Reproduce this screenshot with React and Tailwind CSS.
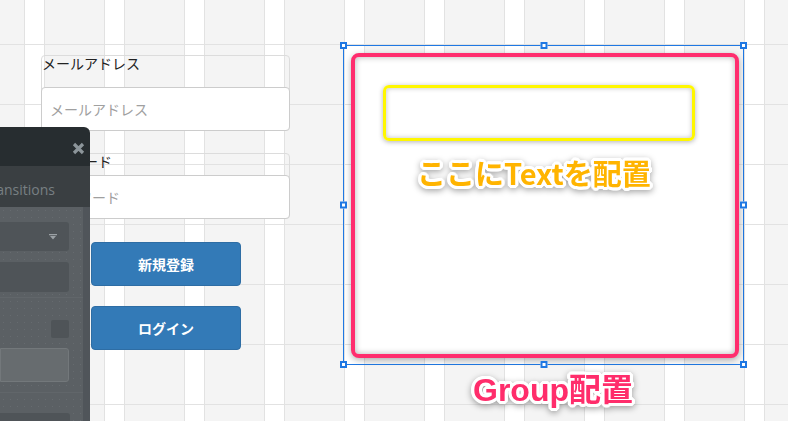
const jp = "font-['Noto_Sans_CJK_JP',sans-serif]";

const outlineWhite =
  "[text-shadow:3px_0_0_#fff,-3px_0_0_#fff,0_3px_0_#fff,0_-3px_0_#fff,2px_2px_0_#fff,-2px_2px_0_#fff,2px_-2px_0_#fff,-2px_-2px_0_#fff,3px_1px_0_#fff,-3px_1px_0_#fff,3px_-1px_0_#fff,-3px_-1px_0_#fff,1px_3px_0_#fff,-1px_3px_0_#fff,1px_-3px_0_#fff,-1px_-3px_0_#fff]";

const Handle = ({ pos }) => (
  <span
    className={`absolute w-[7px] h-[7px] bg-white border-2 border-[#1f78e3] ${pos}`}
  />
);

const FormGroup = ({ label, placeholder, labelHeight }) => (
  <div className="border border-[#dcdcdc] rounded-[4px]">
    <div className={`${labelHeight} text-[14px] leading-[14px] text-[#222] whitespace-nowrap`}>
      {label}
    </div>
    <div className="-mx-px -mb-px h-[44px] bg-white border border-[#cccccc] rounded-[4px] flex items-center px-2 text-[14px] text-[#a0a0a0]">
      {placeholder}
    </div>
  </div>
);

const SidePanel = () => (
  <div className="absolute left-0 top-[127px] bottom-0 w-[90px] rounded-tr-[6px] overflow-hidden flex flex-col">
    {/* title bar */}
    <div className="h-[39px] bg-[#272d30] relative shrink-0">
      <svg
        className="absolute left-[72px] top-[15px]"
        width="13"
        height="13"
        viewBox="0 0 13 13"
      >
        <path d="M2 2L11 11M11 2L2 11" stroke="#8c959a" strokeWidth="3.2" />
      </svg>
    </div>
    {/* tabs */}
    <div className="h-[41px] bg-[#3a3f42] shrink-0 pt-[14px]">
      <div className="w-[55px] flex justify-end whitespace-nowrap font-['Open_Sans',sans-serif] text-[14px] leading-[19px] text-[#787f83]">
        Transitions
      </div>
    </div>
    {/* body */}
    <div className="flex-1 flex">
      <div className="w-[83px] bg-[#5b6064] bg-[image:radial-gradient(circle,#666b6f_0.6px,transparent_1px)] bg-[size:7px_7px] flex flex-col">
        <div className="mt-[15px] h-[29px] w-[69px] bg-[#4f5458] rounded-r-[3px] flex items-center justify-end pr-[12px]">
          <svg width="8" height="6" viewBox="0 0 8 6">
            <path d="M0 0H8V1.3H0Z M1 2H7L4 5.5Z" fill="#9ba1a5" />
          </svg>
        </div>
        <div className="mt-[11px] h-[30px] w-[69px] bg-[#4f5458] rounded-r-[3px]" />
        <div className="mt-[5px] h-px w-full bg-[#61666a]" />
        <div className="mt-[22px] ml-[51px] w-[18px] h-[18px] bg-[#4f5458] rounded-[2px]" />
        <div className="mt-[10px] h-[34px] w-[69px] bg-[#676c6f] border border-[#73787b] rounded-r-[3px]" />
        <div className="mt-[10px] h-px w-full bg-[#61666a]" />
        <div className="mt-[20px] flex-1 w-[70px] bg-[#4f5458] rounded-tr-[3px]" />
      </div>
      <div className="w-[7px] bg-[#50555a]" />
    </div>
  </div>
);

export default function App() {
  return (
    <div
      className={`relative w-[788px] h-[421px] overflow-hidden bg-[#f4f4f4] bg-[image:linear-gradient(to_bottom,#e2e2e2_1px,transparent_1px),linear-gradient(to_right,#e2e2e2_0_1px,#ffffff_1px_20px,#e2e2e2_20px_21px,transparent_21px)] bg-[size:80px_60px] bg-[position:24px_44px] ${jp}`}
    >
      {/* form */}
      <div className="absolute left-[41px] top-[55px] w-[249px] flex flex-col">
        <FormGroup label="メールアドレス" placeholder="メールアドレス" labelHeight="h-[31px]" />
        <div className="mt-[22px]">
          <FormGroup label="パスワード" placeholder="パスワード" labelHeight="h-[21px]" />
        </div>
        <button className="mt-[23px] ml-[50px] w-[150px] h-[44px] rounded-[4px] bg-[#337ab7] border border-[#2e6da4] text-white font-bold text-[14px]">
          新規登録
        </button>
        <button className="mt-[20px] ml-[50px] w-[150px] h-[44px] rounded-[4px] bg-[#337ab7] border border-[#2e6da4] text-white font-bold text-[14px]">
          ログイン
        </button>
      </div>

      <SidePanel />

      {/* selected group */}
      <div className="absolute left-[343px] top-[45px] w-[401px] h-[320px] border border-[#1f78e3] pt-[7px] pl-[7px]">
        <div className="w-[388px] h-[305px] border-4 border-[#ff2d6e] rounded-[8px] bg-white shadow-[0_2px_6px_rgba(0,0,0,0.3),inset_0_0_6px_rgba(0,0,0,0.3)] pt-[28px] pl-[28px]">
          <div className="w-[312px] h-[56px] border-[3px] border-[#fff700] rounded-[6px] shadow-[0_1px_5px_rgba(0,0,0,0.3),inset_0_0_5px_rgba(0,0,0,0.25)]" />
          <div
            className={`mt-[17px] ml-[34px] text-[29px] leading-none font-bold text-[#ffb400] whitespace-nowrap ${outlineWhite} drop-shadow-[0_2px_3px_rgba(0,0,0,0.35)]`}
          >
            ここにTextを配置
          </div>
        </div>
        <Handle pos="-left-[4px] -top-[4px]" />
        <Handle pos="left-1/2 -translate-x-1/2 -top-[4px]" />
        <Handle pos="-right-[4px] -top-[4px]" />
        <Handle pos="-left-[4px] top-1/2 -translate-y-1/2" />
        <Handle pos="-right-[4px] top-1/2 -translate-y-1/2" />
        <Handle pos="-left-[4px] -bottom-[4px]" />
        <Handle pos="left-1/2 -translate-x-1/2 -bottom-[4px]" />
        <Handle pos="-right-[4px] -bottom-[4px]" />
      </div>

      <div
        className={`absolute left-[473px] top-[374px] text-[32px] leading-none font-bold text-[#ff2d6b] whitespace-nowrap font-['Liberation_Sans','Noto_Sans_CJK_JP',sans-serif] ${outlineWhite} drop-shadow-[0_2px_3px_rgba(0,0,0,0.35)]`}
      >
        Group配置
      </div>
    </div>
  );
}
